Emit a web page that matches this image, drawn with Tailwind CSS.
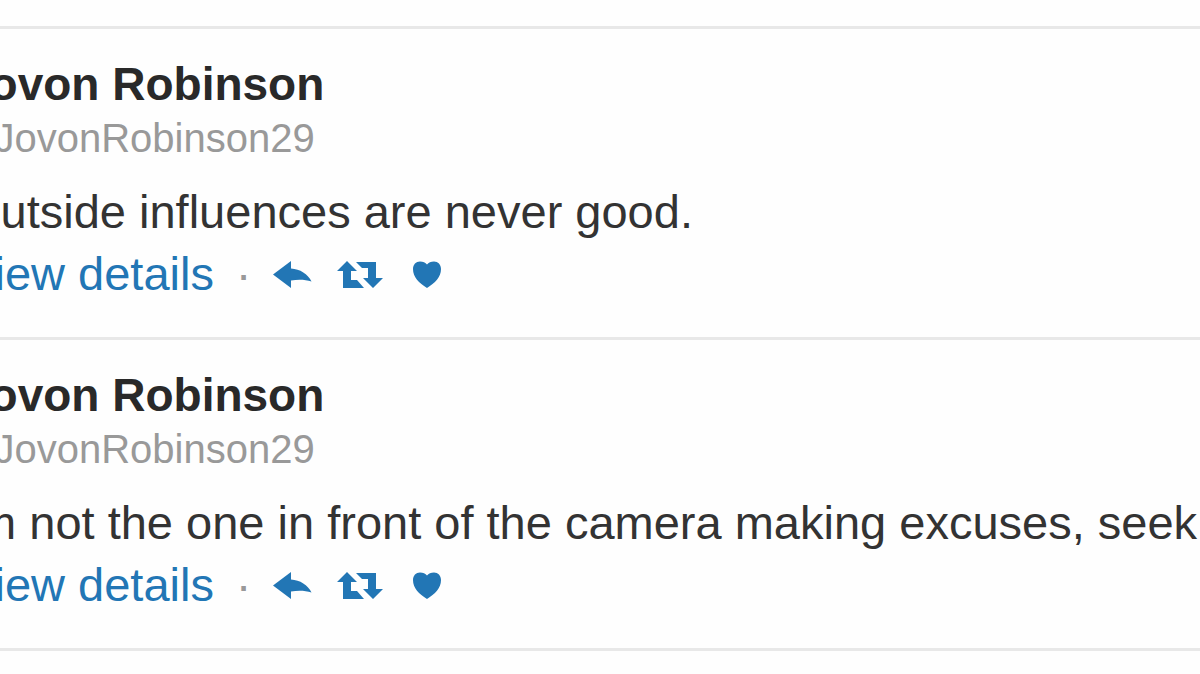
<!DOCTYPE html>
<html lang="en">
<head>
    <meta charset="UTF-8">
    <meta name="viewport" content="width=device-width, initial-scale=1.0">
    <title>Jovon Robinson</title>
    <script src="https://cdn.jsdelivr.net/npm/@tailwindcss/browser@4"></script>
</head>
<body class="bg-[#fefefe] font-['Liberation_Sans',Arial,sans-serif] text-[#333] overflow-hidden">
    <!-- Icons -->
    <svg class="hidden">
        <symbol id="reply" viewBox="0 0 40 28">
            <path d="M0 14.500 L18 1 V8.500 C27 9 35 14 38.500 21.500 C32 19.500 25 19.500 18 20.500 V28 Z"/>
        </symbol>
        <symbol id="retweet" viewBox="0 0 46 28">
            <path d="M10 1 L20 11 H14 V20 H20 L27 28 H6 V11 H0 Z"/>
            <path d="M19 2 H39 V18 H46 L36 28 L26 18 H31 V8 H25 Z"/>
        </symbol>
        <symbol id="heart" viewBox="0 0 28 28">
            <path d="M14 28 C6 23 0 17 0 9 C0 4.500 3 1.500 7 1.500 C10 1.500 12.500 2.500 14 4.500 C15.500 2.500 18 1.500 21 1.500 C25 1.500 28 4.500 28 9 C28 17 22 23 14 28 Z"/>
        </symbol>
    </svg>

    <main class="whitespace-nowrap">
        <div class="h-[29px] border-b-3 border-[#e8e8e8]"></div>

        <article class="-ml-9 pt-[29px] pb-8 border-b-3 border-[#e8e8e8]">
            <h2 class="text-[46px] leading-[52px] font-bold text-[#292929]">Jovon Robinson</h2>
            <p class="text-[40px] leading-[56px] text-[#999]"><span class="text-3xl">@</span>JovonRobinson29</p>
            <p class="mt-[15px] text-[47px] leading-[62px]">Outside influences are never good.</p>
            <footer class="flex items-center text-[47px] leading-[62px] text-[#2276b5]">
                <a href="#">View details</a>
                <span class="w-[59px] text-center text-[#999]">·</span>
                <button aria-label="Reply"><svg class="w-10 h-7 fill-current"><use href="#reply"/></svg></button>
                <button aria-label="Retweet" class="ml-6"><svg class="w-[46px] h-7 fill-current"><use href="#retweet"/></svg></button>
                <button aria-label="Like" class="ml-[30px]"><svg class="w-7 h-7 fill-current"><use href="#heart"/></svg></button>
            </footer>
        </article>

        <article class="-ml-9 pt-[29px] pb-8 border-b-3 border-[#e8e8e8]">
            <h2 class="text-[46px] leading-[52px] font-bold text-[#292929]">Jovon Robinson</h2>
            <p class="text-[40px] leading-[56px] text-[#999]"><span class="text-3xl">@</span>JovonRobinson29</p>
            <p class="mt-[15px] text-[47px] leading-[62px]">Im not the one in front of the camera making excuses, seek</p>
            <footer class="flex items-center text-[47px] leading-[62px] text-[#2276b5]">
                <a href="#">View details</a>
                <span class="w-[59px] text-center text-[#999]">·</span>
                <button aria-label="Reply"><svg class="w-10 h-7 fill-current"><use href="#reply"/></svg></button>
                <button aria-label="Retweet" class="ml-6"><svg class="w-[46px] h-7 fill-current"><use href="#retweet"/></svg></button>
                <button aria-label="Like" class="ml-[30px]"><svg class="w-7 h-7 fill-current"><use href="#heart"/></svg></button>
            </footer>
        </article>
    </main>
</body>
</html>
